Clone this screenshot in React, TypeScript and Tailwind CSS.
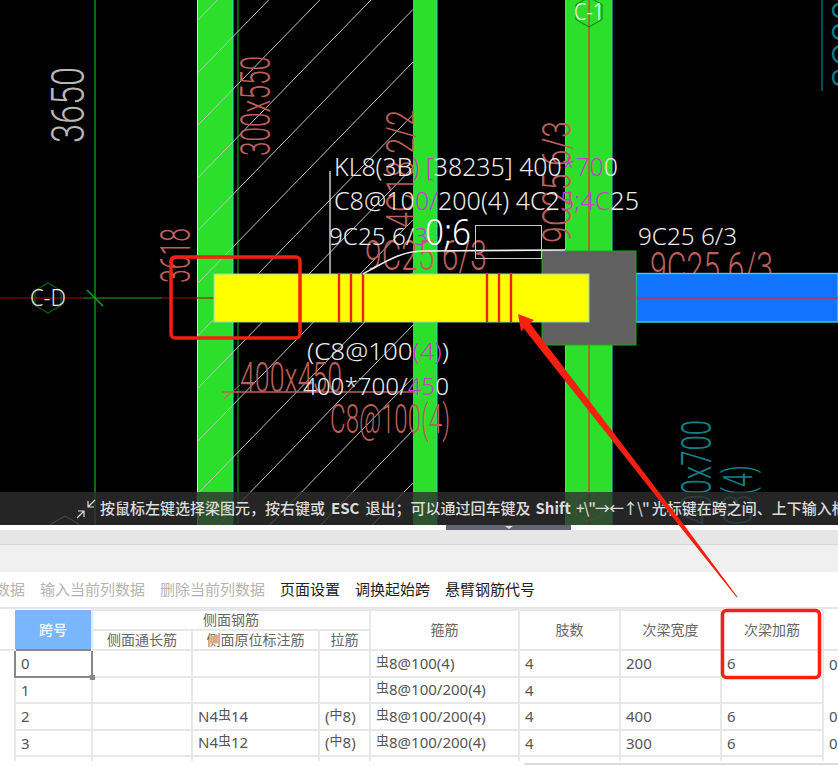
const RED = "#bc5f5b";
const TEAL = "#0f8088";
const MAG = "#c93fc9";
const WHITE = "#ececec";

function Label({ x, y, len, size, fill, rot, thin, children }: { x: number; y: number; len: number; size: number; fill: string; rot?: boolean; thin?: boolean; children: React.ReactNode }) {
    return (
        <text
            x={rot ? 0 : x}
            y={rot ? 0 : y}
            transform={rot ? `translate(${x} ${y}) rotate(-90)` : undefined}
            fontSize={size}
            fill={fill}
            className={thin ? "font-['Roboto',sans-serif] font-light" : "font-['Noto_Sans',sans-serif] font-light"}
            textLength={len}
            lengthAdjust="spacingAndGlyphs"
        >
            {children}
        </text>
    );
}

function Hex({ cx, cy, r, stroke }: { cx: number; cy: number; r: number; stroke: string }) {
    const pts = [0, 60, 120, 180, 240, 300]
        .map((a) => {
            const t = ((a + 30) * Math.PI) / 180;
            return `${cx + r * Math.cos(t)},${cy + r * Math.sin(t)}`;
        })
        .join(" ");
    return <polygon points={pts} fill="none" stroke={stroke} strokeWidth="1" />;
}

function CadDrawing() {
    const hatch = [];
    for (let i = -2; i < 14; i++) {
        const y0 = 21 + i * 52.6;
        hatch.push(<line key={i} x1={197} y1={y0} x2={413} y2={y0 - 222} stroke="#c4c4c4" strokeWidth="1" />);
    }
    return (
        <svg width="838" height="525" viewBox="0 0 838 525" className="block">
            <rect width="838" height="525" fill="#000" />

            {/* axis */}
            <line x1="95" y1="0" x2="95" y2="525" stroke="#10b010" strokeWidth="1.2" />
            <line x1="238" y1="0" x2="238" y2="525" stroke="#0c5a0c" strokeWidth="2" />

            {/* columns */}
            <rect x="197" y="0" width="36" height="525" fill="#2bdf2b" />
            <rect x="413" y="0" width="24" height="525" fill="#2bdf2b" />
            <rect x="565" y="0" width="47" height="525" fill="#2bdf2b" />
            <line x1="197.5" y1="0" x2="197.5" y2="525" stroke="#c8e8c8" />
            <line x1="233" y1="0" x2="233" y2="525" stroke="#37d8d8" />
            <line x1="437" y1="0" x2="437" y2="525" stroke="#37d8d8" />
            <line x1="565.5" y1="0" x2="565.5" y2="525" stroke="#37d8d8" />
            <line x1="612" y1="0" x2="612" y2="525" stroke="#37d8d8" />

            {/* hatching */}
            <svg x="197" y="0" width="216" height="525" viewBox="197 0 216 525">
                {hatch}
            </svg>

            {/* red rotated labels */}
            <Label x={270} y={156} len={100} size={42} fill={RED} rot thin>300x550</Label>
            <Label x={190} y={283} len={55} size={42} fill={RED} rot thin>3618</Label>
            <Label x={84} y={143} len={76} size={46} fill="#b8b8b8" rot thin>3650</Label>
            <Label x={414} y={228} len={118} size={38} fill={RED} rot thin>4C18 2/2</Label>
            <Label x={571} y={243} len={122} size={41} fill={RED} rot thin>9C25 6/3</Label>
            <Label x={365} y={270} len={122} size={42} fill={RED} thin>9C25 6/3</Label>
            <Label x={650} y={282} len={123} size={42} fill={RED} thin>9C25 6/3</Label>
            <Label x={240} y={392} len={102} size={43} fill={RED} thin>400x450</Label>
            <Label x={330} y={433} len={120} size={40} fill={RED} thin>C8@100(4)</Label>
            <line x1="222" y1="392" x2="415" y2="392" stroke={RED} strokeWidth="1.5" />
            <line x1="224" y1="399" x2="240" y2="385" stroke={RED} strokeWidth="1" />

            {/* teal labels */}
            <Label x={711} y={525} len={105} size={42} fill={TEAL} rot thin>400x700</Label>
            <Label x={752} y={525} len={60} size={40} fill={TEAL} rot thin>C8(4)</Label>
            <line x1="822" y1="0" x2="822" y2="91" stroke={TEAL} strokeWidth="1.2" />
            <Label x={862} y={88} len={88} size={42} fill={TEAL} rot thin>3C20</Label>

            {/* grid lines */}
            <line x1="0" y1="298" x2="83" y2="298" stroke="#b00000" strokeWidth="1.2" />
            <line x1="83" y1="298" x2="162" y2="298" stroke="#10b010" strokeWidth="1.2" />
            <line x1="162" y1="298" x2="215" y2="298" stroke="#a80c0c" strokeWidth="1.2" />
            <line x1="87" y1="290" x2="103" y2="306" stroke="#10b010" strokeWidth="1.2" />
            <line x1="589" y1="0" x2="589" y2="525" stroke="#cc4a1c" strokeWidth="1.4" />

            {/* beams */}
            <rect x="636" y="273.5" width="202" height="48.5" fill="#1273ff" stroke="#40d0e8" strokeWidth="1.4" />
            <line x1="636" y1="298" x2="838" y2="298" stroke="#c8304c" strokeWidth="1.4" />
            <rect x="542" y="251" width="94" height="94" fill="#606060" stroke="#10b010" strokeWidth="1" />
            <rect x="214" y="274" width="375" height="48" fill="#ffff00" stroke="#8fd8c8" strokeWidth="1" />
            {[339, 351, 363, 487, 499, 511].map((x) => (
                <line key={x} x1={x} y1="274" x2={x} y2="322" stroke="#f02020" strokeWidth="2.4" />
            ))}

            {/* leader */}
            <line x1="330" y1="171" x2="330" y2="274" stroke="#d8d8d8" strokeWidth="1.4" />
            <path d="M363 274 C 385 262, 400 251, 425 251 L 565 250" fill="none" stroke="#f0f0f0" strokeWidth="1.6" />
            <rect x="475.5" y="225.5" width="66" height="33" fill="none" stroke="#c8c8c8" strokeWidth="1" />

            {/* white labels */}
            <Label x={334} y={176} len={284} size={25} fill={WHITE}>
                KL8(3B<tspan fill={MAG}>) [</tspan>38235] 400<tspan fill={MAG}>*70</tspan>0
            </Label>
            <Label x={334} y={210} len={305} size={25} fill={WHITE}>
                C8@10<tspan fill={MAG}>0/</tspan>200(4) 4C2<tspan fill={MAG}>5;4C</tspan>25
            </Label>
            <Label x={329} y={245} len={99} size={24} fill={WHITE}>
                9C25 6/<tspan fill={MAG}>3</tspan>
            </Label>
            <Label x={425} y={245} len={46} size={36} fill="#ffffff">0;6</Label>
            <Label x={638} y={245} len={99} size={24} fill={WHITE}>9C25 6/3</Label>
            <Label x={307} y={360} len={142} size={24} fill={WHITE}>
                (C8@100<tspan fill={MAG}>(4)</tspan>)
            </Label>
            <Label x={303} y={395} len={146} size={24} fill={WHITE}>
                400*700/<tspan fill={MAG}>45</tspan>0
            </Label>

            {/* axis bubbles */}
            <Hex cx={48} cy={298} r={15} stroke="#0c7a0c" />
            <Label x={30} y={306} len={36} size={23} fill="#e4e4e4">C-D</Label>
            <Hex cx={589} cy={12} r={15} stroke="#0c7a0c" />
            <Label x={574} y={20} len={30} size={23} fill="#ffffff">C-1</Label>
            <Hex cx={589} cy={507} r={15} stroke="#b8b8b8" />
            <Hex cx={65} cy={532} r={16} stroke="#b8b8b8" />
        </svg>
    );
}

function StatusBar() {
    return (
        <div className="absolute left-0 right-0 top-[492px] h-[33px] bg-[#2e2e2e]/80 flex items-center overflow-hidden whitespace-nowrap">
            <svg width="20" height="20" viewBox="0 0 20 20" className="ml-[76px] mr-1 shrink-0" fill="none" stroke="#e0e0e0" strokeWidth="1.2">
                <path d="M19 1 L12 8 M12 2 V8 H18" />
                <path d="M1 19 L8 12 M2 12 H8 V18" />
            </svg>
            <span className="text-[15px] font-medium text-[#dcdcdc] font-['Noto_Sans_CJK_SC',sans-serif]">
                按鼠标左键选择梁图元，按右键或<b className="mx-[6px] font-bold">ESC</b>退出；可以通过回车键及<b className="mx-[5px] font-bold">Shift</b><span className="tracking-[-1px]">+\"→←↑\"</span><span className="ml-[3px]">光标键在跨之间、上下输入框</span>
            </span>
        </div>
    );
}

function Bar({ symbol, value }: { symbol: string; value: string }) {
    return (
        <>
            <span className="text-[13px] relative -top-[3px]">{symbol}</span>
            {value}
        </>
    );
}

const rows = [
    { span: "0", side: null, tie: null, stir: "8@100(4)", legs: "4", width: "200", add: "6", tail: "0" },
    { span: "1", side: null, tie: null, stir: "8@100/200(4)", legs: "4", width: "", add: "", tail: "" },
    { span: "2", side: "14", tie: true, stir: "8@100/200(4)", legs: "4", width: "400", add: "6", tail: "0" },
    { span: "3", side: "12", tie: true, stir: "8@100/200(4)", legs: "4", width: "300", add: "6", tail: "0" },
];

const th = "border-2 border-[#e8e8e8] font-normal text-[14px] leading-4 text-[#666] text-center";
const td = "border-2 border-[#e8e8e8] pl-[5px] text-[15px] leading-5 text-[#555] h-[26.5px] p-0 whitespace-nowrap";

function SteelTable() {
    return (
        <div className="h-[154px] overflow-hidden border-t-2 border-[#e8e8e8]">
            <table className="table-fixed border-collapse w-[838px]">
                <colgroup>
                    <col className="w-[15px]" />
                    <col className="w-[77px]" />
                    <col className="w-[100px]" />
                    <col className="w-[127px]" />
                    <col className="w-[51px]" />
                    <col className="w-[149px]" />
                    <col className="w-[101px]" />
                    <col className="w-[101px]" />
                    <col className="w-[102px]" />
                    <col className="w-[15px]" />
                </colgroup>
                <thead>
                    <tr className="h-[20px]">
                        <th rowSpan={2} className="border-b-2 border-[#e8e8e8]"></th>
                        <th rowSpan={2} className="bg-[#79b6fb] text-[#f4f8ff] text-[14px] leading-4 font-medium">跨号</th>
                        <th colSpan={3} className={th}>侧面钢筋</th>
                        <th rowSpan={2} className={th}>箍筋</th>
                        <th rowSpan={2} className={th}>肢数</th>
                        <th rowSpan={2} className={th}>次梁宽度</th>
                        <th rowSpan={2} className={th}>次梁加筋</th>
                        <th rowSpan={2} className="border-b-2 border-[#e8e8e8]"></th>
                    </tr>
                    <tr className="h-[20px]">
                        <th className={th}>侧面通长筋</th>
                        <th className={th}>侧面原位标注筋</th>
                        <th className={th}>拉筋</th>
                    </tr>
                </thead>
                <tbody>
                    {rows.map((r, i) => (
                        <tr key={r.span}>
                            <td></td>
                            <td className={i === 0 ? "relative border-2 border-[#888] pl-[5px] text-[15px] leading-5 text-[#555] h-[26.5px] p-0" : td}>
                                {r.span}
                                {i === 0 && <span className="absolute -right-[4px] -bottom-[4px] w-[5px] h-[5px] bg-[#888]"></span>}
                            </td>
                            <td className={td}></td>
                            <td className={td}>
                                {r.side && <>N4<Bar symbol="虫" value={r.side} /></>}
                            </td>
                            <td className={td}>
                                {r.tie && <>(<Bar symbol="中" value="8" />)</>}
                            </td>
                            <td className={td}><Bar symbol="虫" value={r.stir} /></td>
                            <td className={td}>{r.legs}</td>
                            <td className={td}>{r.width}</td>
                            <td className={td}>{r.add}</td>
                            <td className="pl-[5px] text-[15px] leading-5 text-[#555]">{r.tail}</td>
                        </tr>
                    ))}
                    <tr className="h-[26px]">
                        <td></td>
                        <td className={td}></td>
                        <td className={td}></td>
                        <td className={td}></td>
                        <td className={td}></td>
                        <td className={td}></td>
                        <td className={td}></td>
                        <td className={td}></td>
                        <td className={td}></td>
                        <td></td>
                    </tr>
                </tbody>
            </table>
        </div>
    );
}

function Markup() {
    return (
        <svg width="838" height="766" viewBox="0 0 838 766" className="absolute left-0 top-0 pointer-events-none">
            <rect x="171" y="257" width="129" height="81" rx="4" fill="none" stroke="#f5200f" strokeWidth="3.5" />
            <rect x="722.5" y="610.5" width="97" height="67" rx="4" fill="none" stroke="#f5200f" strokeWidth="3.5" />
            <polygon points="518,314 534,320 530.2,323.6 686.1,527.8 737.4,596.7 736.6,597.3 682.9,530.2 523.8,328.4 521,331.5" fill="#f5200f" />
        </svg>
    );
}

export default function App() {
    return (
        <div className="relative w-[838px] h-[766px] overflow-hidden bg-white font-['Noto_Sans','Noto_Sans_CJK_SC',sans-serif]">
            <div className="relative h-[525px]">
                <CadDrawing />
                <StatusBar />
            </div>
            <div className="h-[5px] bg-white">
                <div className="ml-[446px] w-[125px] h-full bg-[#5f6672] flex justify-center">
                    <span className="mt-[1px] w-0 h-0 border-x-[4px] border-x-transparent border-t-[3px] border-t-[#ddd]"></span>
                </div>
            </div>
            <div className="h-[15px] bg-[#e6e6e6] border-b border-[#d8d8d8]"></div>
            <div className="h-[27px] bg-[#f0f0f0]"></div>
            <div className="h-[35px] flex items-center gap-[15px] -ml-[5px] text-[15px] text-[#222] whitespace-nowrap font-['Noto_Sans_CJK_SC',sans-serif]">
                <span className="text-[#b4b4b4]">数据</span>
                <span className="text-[#b4b4b4]">输入当前列数据</span>
                <span className="text-[#b4b4b4]">删除当前列数据</span>
                <span>页面设置</span>
                <span>调换起始跨</span>
                <span>悬臂钢筋代号</span>
            </div>
            <SteelTable />
            <div className="ml-[524px] h-[2px] mt-[2px] bg-[#ddd]"></div>
            <Markup />
        </div>
    );
}
